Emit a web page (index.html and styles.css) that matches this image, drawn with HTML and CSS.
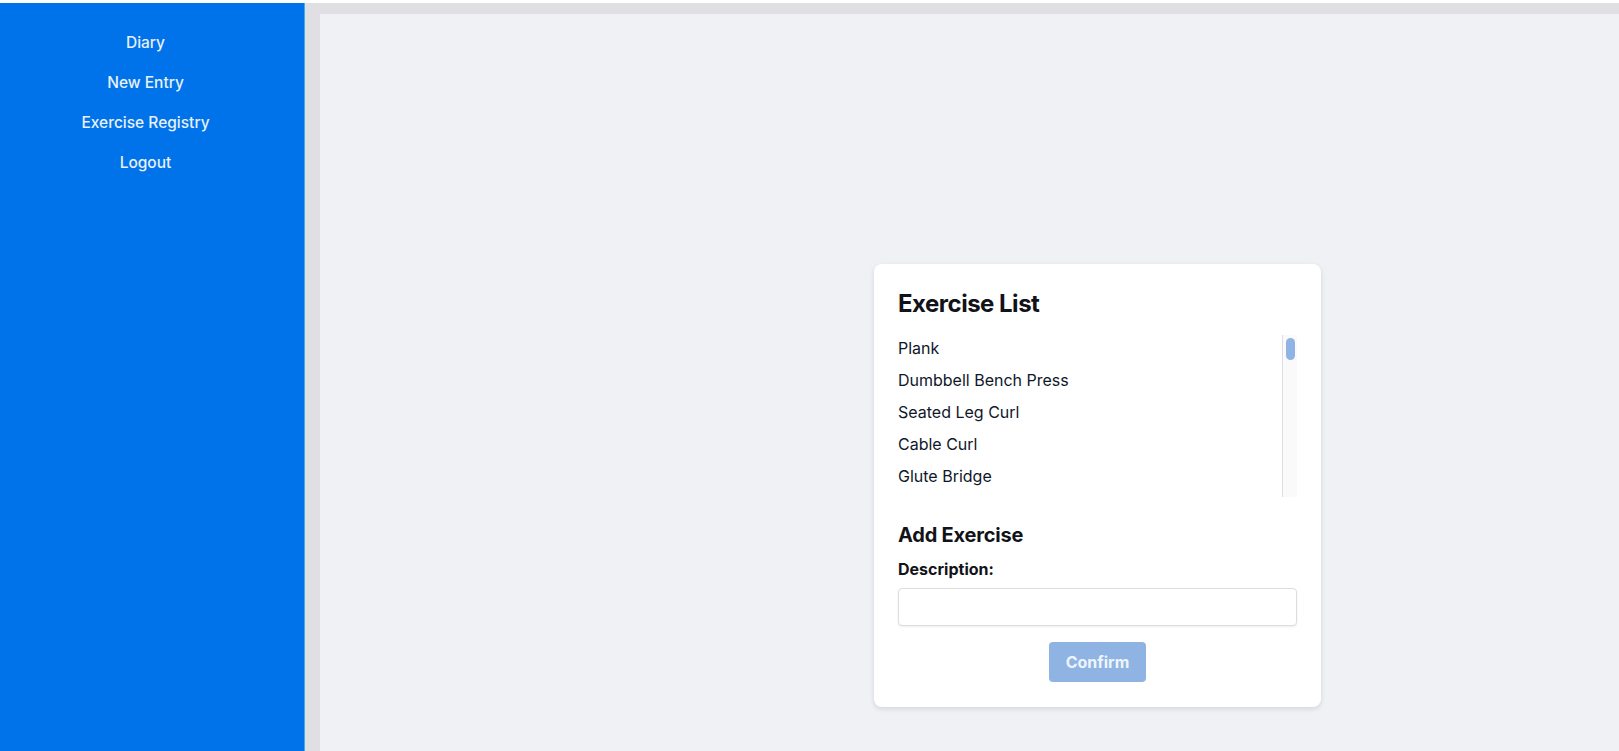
FILE: index.html
```html
<!DOCTYPE html>
<html lang="en">
<head>
<meta charset="utf-8">
<title>Exercise Registry</title>
<link rel="stylesheet" href="styles.css">
</head>
<body>
<div class="app">
  <nav class="sidebar">
    <a class="nav-link" href="#">Diary</a>
    <a class="nav-link" href="#">New Entry</a>
    <a class="nav-link" href="#">Exercise Registry</a>
    <a class="nav-link" href="#">Logout</a>
  </nav>
  <div class="frame">
    <main class="main">
      <section class="card">
        <h1 class="title">Exercise List</h1>
        <div class="list-box">
          <ul class="list">
            <li>Plank</li>
            <li>Dumbbell Bench Press</li>
            <li>Seated Leg Curl</li>
            <li>Cable Curl</li>
            <li>Glute Bridge</li>
          </ul>
          <div class="scrollbar" aria-hidden="true"><div class="thumb"></div></div>
        </div>
        <h2 class="subtitle">Add Exercise</h2>
        <form class="form">
          <label class="label" for="desc">Description:</label>
          <input class="input" id="desc" type="text">
          <div class="actions">
            <button class="btn" type="button" disabled>Confirm</button>
          </div>
        </form>
      </section>
    </main>
  </div>
</div>
</body>
</html>
```
FILE: styles.css
```css
* { box-sizing: border-box; }
html, body { margin: 0; padding: 0; height: 100%; }
body {
  font-family: Inter, "Noto Sans", "Liberation Sans", sans-serif;
  background: #ffffff;
  color: #0f172a;
  overflow: hidden;
}
.app {
  display: flex;
  height: 100vh;
  border-top: 3px solid #ffffff;
}
.sidebar {
  width: 305px;
  flex: 0 0 305px;
  background: #0073ea;
  border-right: 1px solid #37b3e8;
  display: flex;
  flex-direction: column;
  align-items: center;
  padding: 20px 13px 0 0;
}
.nav-link {
  display: block;
  color: #e8f0f8;
  text-decoration: none;
  font-size: 15.5px;
  font-weight: 500;
  line-height: 40px;
  height: 40px;
}
.frame {
  flex: 1;
  background: #e0dfe4;
  padding: 11px 0 0 15px;
  display: flex;
}
.main {
  flex: 1;
  background: #f0f1f5;
  padding: 250px 0 0 554px;
}
.card {
  width: 447px;
  background: #ffffff;
  border-radius: 8px;
  box-shadow: 0 2px 5px rgba(20, 20, 40, 0.12);
  padding: 24px 24px 25px;
}
.title {
  margin: 0;
  font-size: 24px;
  font-weight: 700;
  line-height: 32px;
  letter-spacing: -0.5px;
  color: #111318;
}
.list-box {
  display: flex;
  margin-top: 12px;
  height: 165px;
}
.list {
  flex: 1;
  list-style: none;
  margin: 0;
  padding: 0;
}
.list li {
  font-size: 16px;
  line-height: 32px;
  height: 32px;
  color: #0f172a;
}
.scrollbar {
  width: 15px;
  margin-top: 3px;
  background: #fafafb;
  border-left: 1px solid #dcdde5;
  padding: 3px 2px 0 3px;
}
.thumb {
  height: 22px;
  border-radius: 6px;
  background: #8fb3e4;
}
.subtitle {
  margin: 24px 0 0;
  font-size: 20px;
  font-weight: 700;
  line-height: 28px;
  letter-spacing: -0.2px;
  color: #111318;
}
.form {
  display: flex;
  flex-direction: column;
}
.label {
  margin-top: 10px;
  font-size: 16px;
  font-weight: 700;
  line-height: 20px;
  color: #111318;
}
.input {
  margin-top: 9px;
  height: 38px;
  width: 100%;
  border: 1px solid #dcdde4;
  border-radius: 4px;
  box-shadow: 0 1px 2px rgba(20, 20, 40, 0.08);
  font: inherit;
  padding: 0 10px;
  background: #ffffff;
}
.actions {
  display: flex;
  justify-content: center;
  margin-top: 16px;
}
.btn {
  width: 97px;
  height: 40px;
  border: none;
  border-radius: 4px;
  background: #8fb4e3;
  color: #eef4fc;
  font-family: inherit;
  font-size: 16px;
  font-weight: 700;
}
```
